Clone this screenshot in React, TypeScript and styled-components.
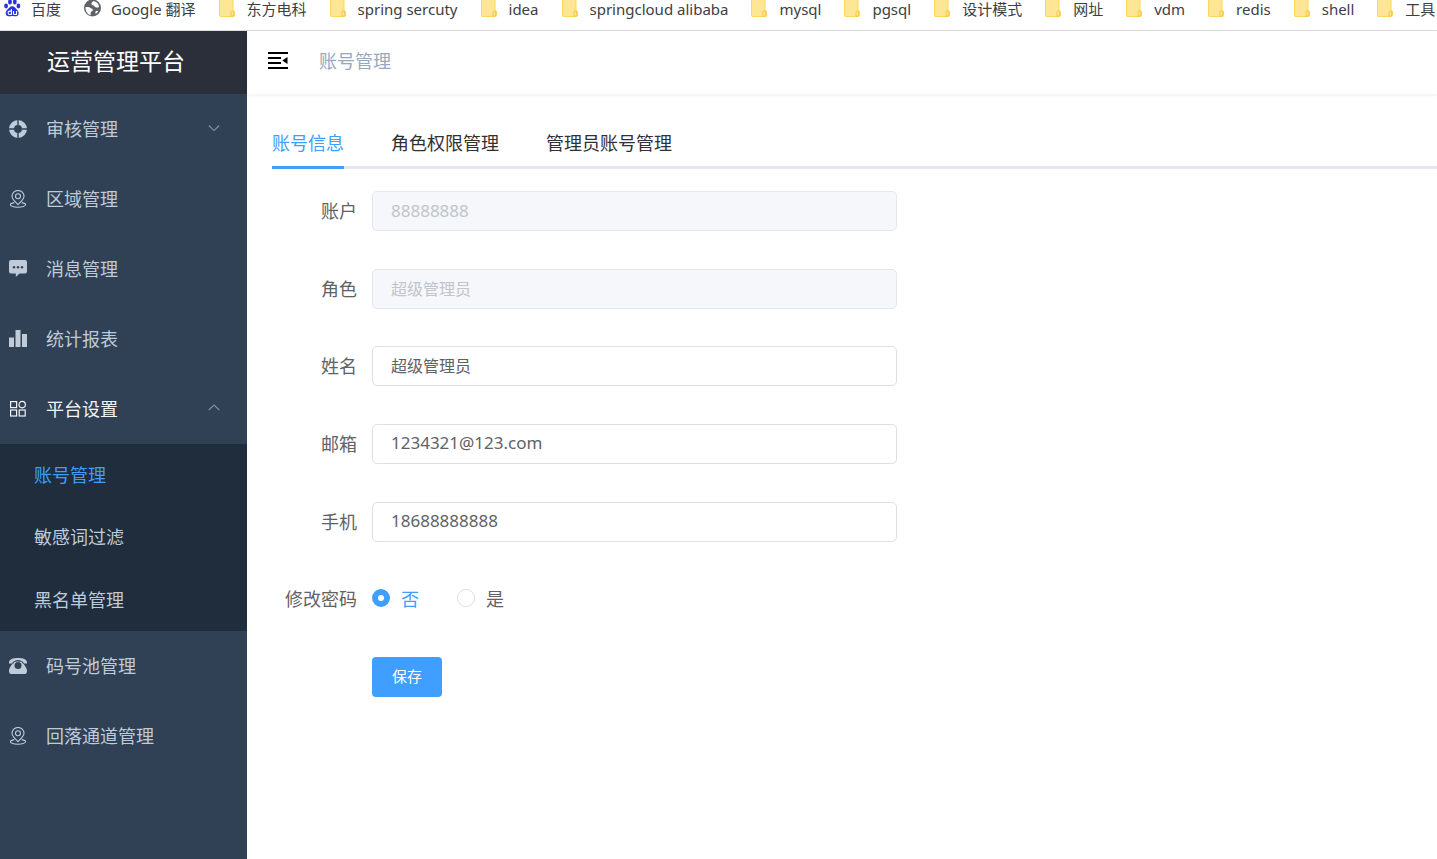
import React, { useState } from 'react';
import styled, { createGlobalStyle } from 'styled-components';

const GlobalStyle = createGlobalStyle`
  *, *::before, *::after { box-sizing: border-box; }
  html, body, #root { height: 100%; }
  body {
    margin: 0;
    background: #fff;
    color: #303133;
    font-family: "Noto Sans", "Noto Sans CJK SC", sans-serif;
    font-size: 18px;
    overflow: hidden;
  }
  button, input { font-family: inherit; }
  a { color: inherit; text-decoration: none; }
`;

const Page = styled.div`
  display: flex;
  flex-direction: column;
  height: 100%;
`;

const BookmarkBar = styled.nav`
  display: flex;
  flex: none;
  gap: 23px;
  height: 31px;
  padding: 0 0 13px 4px;
  border-bottom: 1px solid #dadce0;
  overflow: hidden;
`;

const Bookmark = styled.a<{ $folder?: boolean }>`
  display: flex;
  flex: none;
  align-items: center;
  gap: ${(p) => (p.$folder ? 11 : 10)}px;
  color: #3c4043;
  font-size: 15px;
  line-height: 18px;
  white-space: nowrap;

  svg { display: block; flex: none; }
`;

const Shell = styled.div`
  display: flex;
  flex: 1;
  min-height: 0;
`;

const Sidebar = styled.aside`
  flex: none;
  width: 247px;
  background: #304156;
  color: #bfcbd9;
`;

const Brand = styled.h1`
  margin: 0;
  height: 63px;
  padding-left: 47px;
  background: #2b2f3a;
  color: #fff;
  font-size: 23px;
  font-weight: 400;
  line-height: 60px;
`;

const MenuItem = styled.a<{ $open?: boolean }>`
  display: flex;
  align-items: center;
  gap: 19px;
  height: 70px;
  padding: 0 27px 0 9px;
  color: ${(p) => (p.$open ? '#f4f4f5' : '#bfcbd9')};

  span { flex: 1; padding-bottom: 2px; }
  svg { display: block; flex: none; }
`;

const SubMenu = styled.div`
  display: flex;
  flex-direction: column;
  height: 187px;
  background: #1f2d3d;
`;

const SubItem = styled.a<{ $active?: boolean }>`
  display: flex;
  flex: 1;
  align-items: center;
  padding: 0 0 2px 34px;
  color: ${(p) => (p.$active ? '#409eff' : '#bfcbd9')};
`;

const Main = styled.main`
  flex: 1;
  min-width: 0;
`;

const TopBar = styled.header`
  display: flex;
  align-items: center;
  gap: 30px;
  height: 63px;
  padding: 0 20px 5px;
  box-shadow: 0 1px 4px rgba(0, 21, 41, 0.08);
`;

const FoldButton = styled.button`
  padding: 0;
  border: 0;
  background: none;
  cursor: pointer;

  svg { display: block; }
`;

const Crumb = styled.span`
  color: #97a8be;
`;

const Content = styled.section`
  padding: 25px 0 0 25px;
`;

const Tabs = styled.div`
  display: flex;
  gap: 47px;
  height: 50px;
  border-bottom: 3px solid #e4e7ed;
`;

const Tab = styled.button<{ $active?: boolean }>`
  height: 50px;
  padding: 0 0 1px;
  border: 0;
  border-bottom: 3px solid ${(p) => (p.$active ? '#409eff' : 'transparent')};
  background: none;
  color: ${(p) => (p.$active ? '#409eff' : '#303133')};
  font-size: 18px;
  cursor: pointer;
`;

const Form = styled.form`
  display: flex;
  flex-direction: column;
  justify-content: space-between;
  width: 625px;
  max-width: 100%;
  height: 506px;
  margin-top: 22px;
`;

const Row = styled.div`
  display: grid;
  grid-template-columns: 85px 1fr;
  column-gap: 15px;
  align-items: center;
  height: 40px;
`;

const Label = styled.label`
  padding-bottom: 2px;
  color: #606266;
  text-align: right;
  white-space: nowrap;
`;

const TextBox = styled.input<{ $latin?: boolean }>`
  width: 100%;
  height: 40px;
  padding: 0 18px 2px;
  border: 1px solid #dcdfe6;
  border-radius: 5px;
  background: #fff;
  color: #606266;
  font-size: ${(p) => (p.$latin ? 17 : 16)}px;
  outline: none;

  &:disabled {
    border-color: #e4e7ed;
    background: #f5f7fa;
    color: #c0c4cc;
  }
`;

const Choices = styled.div`
  display: flex;
  gap: 38px;
  padding-bottom: 2px;
`;

const Choice = styled.label<{ $checked: boolean }>`
  display: flex;
  align-items: center;
  gap: 11px;
  color: ${(p) => (p.$checked ? '#409eff' : '#606266')};
`;

const Radio = styled.input`
  appearance: none;
  width: 18px;
  height: 18px;
  margin: 0;
  border: 1px solid #dcdfe6;
  border-radius: 50%;
  background: #fff;

  &:checked {
    border: 6px solid #409eff;
  }
`;

const SaveButton = styled.button`
  grid-column: 2;
  justify-self: start;
  width: 70px;
  height: 40px;
  padding: 0 0 2px;
  border: 0;
  border-radius: 4px;
  background: #409eff;
  color: #fff;
  font-size: 15px;
  cursor: pointer;
`;

const BaiduIcon = () => (
  <svg width="17" height="18" viewBox="0 1 17 18" fill="#2932e1">
    <ellipse cx="2.1" cy="7" rx="1.9" ry="2.4" />
    <ellipse cx="6" cy="3" rx="1.9" ry="2.6" />
    <ellipse cx="10.8" cy="3" rx="1.9" ry="2.6" />
    <ellipse cx="14.4" cy="7" rx="1.9" ry="2.4" />
    <path d="M8.2 7.2c2.4 0 3.2 2 4.8 3.5 2.4 2.2 2.3 6.3-1 6.5-1.400.1-2.200-.3-3.700-.3s-2.400.4-3.800.3c-3.300-.2-3.700-4.200-1.200-6.400 1.800-1.600 2.500-3.600 4.900-3.600z" />
    <path d="M7.400 10v5.500H5.700c-2.200 0-2.200-3.400 0-3.400h1.700M9.500 12v2.500q0 1 1 1h2V12" fill="none" stroke="#fff" strokeWidth="1.100" />
  </svg>
);

const GlobeIcon = () => (
  <svg width="17" height="18" viewBox="0 0 17 18">
    <circle cx="8.500" cy="8" r="8.500" fill="#5f6368" />
    <path d="M1.500 7c1.500.200 3.500-.2 5 1 1.300 1 2.800.8 2.300 2.300-.5 1.300-2 1.200-2.200 2.700v2.200C3.500 14.500 1.200 11 1.500 7zM9 1.300c-.3 1.400-1.700 1.200-1.600 2.600.2 1.500 2.100.8 2.900 2 .8 1.400 2.300 1.700 4.800 1.400-.1-3.300-2.600-6-6.100-6zM12 11c.9.100 1.500-.5 2.300-.3-.5 1.300-1.400 2.400-2.500 3.100-.6-1-.6-2 .2-2.800z" fill="#fff" />
  </svg>
);

const FolderIcon = () => (
  <svg width="17" height="18" viewBox="0 0 17 18">
    <path d="M.5-2H14v12.500l1.500.8v4.200q0 1-1 1h-13q-1 0-1-1z" fill="#ffe694" stroke="#fbd75b" />
    <path d="M12 16.300v-4q0-1.500 1.300-1.500t1.300 1.500v2.500q0 1.500-1.500 1.500z" fill="#ffe694" stroke="#f5c842" />
  </svg>
);

const HelpIcon = () => (
  <svg width="18" height="18" viewBox="0 0 18 18">
    <circle cx="9" cy="9" r="6.500" fill="none" stroke="currentColor" strokeWidth="5" />
    <path d="M9 0v5M9 13v5M0 9h5M13 9h5" stroke="#304156" strokeWidth="1.400" />
  </svg>
);

const LocationIcon = () => (
  <svg width="18" height="18" viewBox="0 0 18 18" fill="none" stroke="currentColor" strokeWidth="1.100">
    <path d="M9 14.600C6 11.500 3 9.300 3 6.300a6 5.800 0 0 1 12 0c0 3-3 5.200-6 8.300z" />
    <circle cx="9" cy="6.200" r="2.500" />
    <path d="M5.300 12.600c-2.400.4-3.900 1.100-3.900 2 0 1.500 3.400 2.600 7.600 2.600s7.600-1.100 7.600-2.600c0-.9-1.500-1.600-3.900-2" />
  </svg>
);

const CommentIcon = () => (
  <svg width="18" height="18" viewBox="0 0 18 18">
    <path d="M2 0h14q2 0 2 2v9.500q0 2-2 2h-5.500L6.800 17v-3.500H2q-2 0-2-2V2q0-2 2-2z" fill="currentColor" />
    <g fill="#304156">
      <circle cx="5" cy="7.300" r="1.200" />
      <circle cx="9" cy="7.300" r="1.200" />
      <circle cx="13" cy="7.300" r="1.200" />
    </g>
  </svg>
);

const DataIcon = () => (
  <svg width="18" height="18" viewBox="0 0 18 18" fill="currentColor">
    <path d="M0 7.500h5V17H0zM6.500 0h5v17h-5zM13 4h5v13h-5z" />
  </svg>
);

const GridIcon = () => (
  <svg width="18" height="18" viewBox="0 0 18 18" fill="none" stroke="currentColor" strokeWidth="1.200">
    <rect x="1.600" y="1.600" width="6" height="6" />
    <circle cx="13.200" cy="4.600" r="3.200" />
    <rect x="1.600" y="10" width="6" height="6" />
    <rect x="10.200" y="10" width="6" height="6" />
  </svg>
);

const PhoneIcon = () => (
  <svg width="18" height="18" viewBox="0 0 18 18">
    <path d="M0 5.200C0 2.500 4 1 9 1s9 1.500 9 4.200v1.300h-3.600V5.200C13.200 4.100 11.300 3.600 9 3.600s-4.200.5-5.400 1.600v1.300H0z" fill="currentColor" />
    <path d="M5.500 4.600h7c1.800 2.100 5.500 6 5.500 9.200 0 2-.6 3.200-2.200 3.200H2.200C.6 17 0 15.800 0 13.800c0-3.200 3.700-7.100 5.500-9.200z" fill="currentColor" />
    <circle cx="9" cy="8.500" r="3.500" fill="#304156" />
    <path d="M3.500 7C5 4.500 6.500 3.600 9 3.600S13 4.500 14.500 7" fill="none" stroke="#304156" strokeWidth=".8" />
  </svg>
);

const Chevron = ({ up }: { up?: boolean }) => (
  <svg width="12" height="10" viewBox="0 0 12 10" fill="none" stroke="#909399" strokeWidth="1.100">
    <path d={up ? 'M.8 6 6 .9 11.200 6' : 'M.8 1.500 6 6.600 11.200 1.500'} />
  </svg>
);

const FoldIcon = () => (
  <svg width="22" height="18" viewBox="0 0 22 18">
    <path d="M1 2h20M1 7h13M1 12h13M1 17h20" stroke="#000" strokeWidth="1.800" />
    <path d="M20.500 6v7L15.300 9.500z" fill="#000" />
  </svg>
);

const bookmarks = [
  '东方电科', 'spring sercuty', 'idea', 'springcloud alibaba', 'mysql', 'pgsql',
  '设计模式', '网址', 'vdm', 'redis', 'shell', '工具',
];

const menuTop = [
  { text: '审核管理', icon: <HelpIcon />, arrow: true },
  { text: '区域管理', icon: <LocationIcon /> },
  { text: '消息管理', icon: <CommentIcon /> },
  { text: '统计报表', icon: <DataIcon /> },
];

const subMenu = ['账号管理', '敏感词过滤', '黑名单管理'];
const tabs = ['账号信息', '角色权限管理', '管理员账号管理'];

const fields = [
  { id: 'account', label: '账户', value: '88888888', disabled: true, latin: true },
  { id: 'role', label: '角色', value: '超级管理员', disabled: true },
  { id: 'name', label: '姓名', value: '超级管理员' },
  { id: 'email', label: '邮箱', value: '1234321@123.com', latin: true },
  { id: 'phone', label: '手机', value: '18688888888', latin: true },
];

export default function App() {
  const [tab, setTab] = useState(0);
  const [change, setChange] = useState('否');

  return (
    <>
      <GlobalStyle />
      <Page>
        <BookmarkBar>
          <Bookmark href="#"><BaiduIcon />百度</Bookmark>
          <Bookmark href="#"><GlobeIcon />Google 翻译</Bookmark>
          {bookmarks.map((b) => (
            <Bookmark href="#" key={b} $folder><FolderIcon />{b}</Bookmark>
          ))}
        </BookmarkBar>
        <Shell>
          <Sidebar>
            <Brand>运营管理平台</Brand>
            <nav>
              {menuTop.map((m) => (
                <MenuItem href="#" key={m.text}>
                  {m.icon}<span>{m.text}</span>{m.arrow && <Chevron />}
                </MenuItem>
              ))}
              <MenuItem href="#" $open><GridIcon /><span>平台设置</span><Chevron up /></MenuItem>
              <SubMenu>
                {subMenu.map((s, i) => (
                  <SubItem href="#" key={s} $active={i === 0}>{s}</SubItem>
                ))}
              </SubMenu>
              <MenuItem href="#"><PhoneIcon /><span>码号池管理</span></MenuItem>
              <MenuItem href="#"><LocationIcon /><span>回落通道管理</span></MenuItem>
            </nav>
          </Sidebar>
          <Main>
            <TopBar>
              <FoldButton type="button" aria-label="收起菜单"><FoldIcon /></FoldButton>
              <Crumb>账号管理</Crumb>
            </TopBar>
            <Content>
              <Tabs role="tablist">
                {tabs.map((t, i) => (
                  <Tab type="button" role="tab" key={t} aria-selected={i === tab} $active={i === tab} onClick={() => setTab(i)}>
                    {t}
                  </Tab>
                ))}
              </Tabs>
              <Form onSubmit={(e) => e.preventDefault()}>
                {fields.map((f) => (
                  <Row key={f.id}>
                    <Label htmlFor={f.id}>{f.label}</Label>
                    <TextBox id={f.id} defaultValue={f.value} disabled={f.disabled} $latin={f.latin} />
                  </Row>
                ))}
                <Row role="radiogroup" aria-labelledby="change-label">
                  <Label as="span" id="change-label">修改密码</Label>
                  <Choices>
                    {['否', '是'].map((c) => (
                      <Choice key={c} $checked={change === c}>
                        <Radio type="radio" name="change" checked={change === c} onChange={() => setChange(c)} />
                        {c}
                      </Choice>
                    ))}
                  </Choices>
                </Row>
                <Row>
                  <SaveButton type="submit">保存</SaveButton>
                </Row>
              </Form>
            </Content>
          </Main>
        </Shell>
      </Page>
    </>
  );
}
